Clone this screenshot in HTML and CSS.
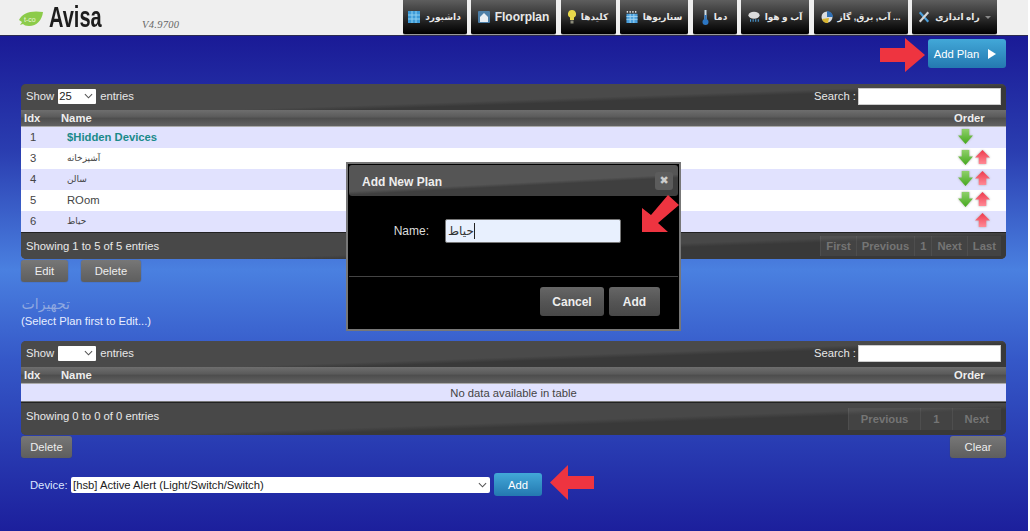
FILE: index.html
```html
<!DOCTYPE html>
<html lang="en">
<head>
<meta charset="utf-8">
<title>Avisa - Plans</title>
<link rel="stylesheet" href="styles.css">
</head>
<body>
<div class="page">
  <header class="topbar">
    <div class="brand">
      <svg class="leaf" viewBox="0 0 24 16" width="24" height="16"><path d="M0 9C3 2 12-1 24 1c-1 8-6 14-14 14-3 0-5-1-6-2l-3 1 2-3z" fill="#8ccb4a"/><text x="5" y="11" font-size="7" fill="#eaf6da" font-family="Liberation Sans">t-co</text></svg>
      <span class="brand-name">Avisa</span>
      <span class="version">V4.9700</span>
    </div>
    <nav class="tabs">
      <a class="tab t1"><svg class="ico" viewBox="0 0 12 12"><rect width="12" height="12" fill="#3d9bd8"/><path d="M0 4h12M0 8h12M4 0v12M8 0v12" stroke="#8fd0f0"/></svg><span dir="rtl">داشبورد</span></a>
      <a class="tab t2 latin"><svg class="ico" viewBox="0 0 12 12"><rect width="12" height="12" rx="1" fill="#4d7fa8"/><path d="M6 2 2 6v5h8V6z" fill="#e8eef4"/></svg><span>Floorplan</span></a>
      <a class="tab t3"><svg class="ico bulb" viewBox="0 0 8 14"><path d="M4 0a4 4 0 0 1 2 7.500V10H2V7.500A4 4 0 0 1 4 0z" fill="#e8d84a"/><rect x="2.500" y="10.500" width="3" height="3" fill="#8c8c7a"/></svg><span dir="rtl">کلیدها</span></a>
      <a class="tab t4"><svg class="ico" viewBox="0 0 12 13"><rect y="3" width="12" height="10" fill="#4a9fdc"/><path d="M0 6h12M0 9h12M4 3v10M8 3v10" stroke="#a5d6f2"/><path d="M1 0v2M4 0v2M7 0v2M10 0v2" stroke="#dcdcdc" stroke-width="1.500"/></svg><span dir="rtl">سناریوها</span></a>
      <a class="tab t5"><svg class="ico thermo" viewBox="0 0 7 15"><rect x="2.500" width="2" height="11" fill="#cfe0ea"/><rect x="2.500" y="5" width="2" height="6" fill="#2c77c4"/><circle cx="3.500" cy="12" r="3" fill="#2c77c4"/></svg><span dir="rtl">دما</span></a>
      <a class="tab t6"><svg class="ico" viewBox="0 0 14 13"><ellipse cx="7" cy="4.500" rx="6.500" ry="4" fill="#dcdcdc"/><path d="M3 9v3M6 9v3M9 9v3M12 9v3" stroke="#4a9fdc" stroke-width="1.200"/></svg><span dir="rtl">آب و هوا</span></a>
      <a class="tab t7"><svg class="ico" viewBox="0 0 12 12"><circle cx="6" cy="6" r="5.500" fill="#d8dce0"/><path d="M6 0a6 6 0 0 1 6 6H6z" fill="#2f6fb4"/><path d="M1 8a6 6 0 0 0 6 4l1-5z" fill="#d9b531"/></svg><span dir="rtl">... آب, برق, گاز</span></a>
      <a class="tab t8"><svg class="ico" viewBox="0 0 14 13"><path d="M2 1 12 12" stroke="#4a9fdc" stroke-width="2.500"/><path d="M12 1 2 12" stroke="#d6d6d6" stroke-width="2.500"/></svg><span dir="rtl">راه اندازی</span><i class="caret"></i></a>
    </nav>
  </header>

  <main class="content">
    <div class="action-row">
      <button class="btn blue addplan">Add Plan <svg viewBox="0 0 8 10" width="8" height="10"><path d="M0 0l8 5-8 5z" fill="#fff"/></svg></button>
    </div>

    <section class="dt first">
      <div class="dt-bar">
        <label>Show <span class="sel">25<svg viewBox="0 0 10 6" width="9" height="6"><path d="M1 1l4 4 4-4" stroke="#555" fill="none" stroke-width="1.200"/></svg></span> entries</label>
        <label class="search">Search : <span class="search-box"></span></label>
      </div>
      <div class="dt-head"><span class="c-idx">Idx</span><span class="c-name">Name</span><span class="c-order">Order</span></div>
      <div class="row odd"><span class="c-idx num">1</span><span class="c-name hidden-dev">$Hidden Devices</span><span class="c-order"><svg class="arr"><use href="#down"/></svg><span class="slot"></span></span></div>
      <div class="row"><span class="c-idx num">3</span><span class="c-name fa" dir="rtl">آشپزخانه</span><span class="c-order"><svg class="arr"><use href="#down"/></svg><svg class="arr"><use href="#up"/></svg></span></div>
      <div class="row odd"><span class="c-idx num">4</span><span class="c-name fa" dir="rtl">سالن</span><span class="c-order"><svg class="arr"><use href="#down"/></svg><svg class="arr"><use href="#up"/></svg></span></div>
      <div class="row"><span class="c-idx num">5</span><span class="c-name">ROom</span><span class="c-order"><svg class="arr"><use href="#down"/></svg><svg class="arr"><use href="#up"/></svg></span></div>
      <div class="row odd"><span class="c-idx num">6</span><span class="c-name fa" dir="rtl">حیاط</span><span class="c-order"><span class="slot"></span><svg class="arr"><use href="#up"/></svg></span></div>
      <div class="dt-foot">
        <span>Showing 1 to 5 of 5 entries</span>
        <div class="pager"><span>First</span><span>Previous</span><span>1</span><span>Next</span><span>Last</span></div>
      </div>
    </section>
    <div class="btn-row">
      <button class="btn grey edit">Edit</button>
      <button class="btn grey del">Delete</button>
    </div>

    <h2 class="devices" dir="rtl">تجهیزات</h2>
    <p class="hint">(Select Plan first to Edit...)</p>

    <section class="dt second">
      <div class="dt-bar">
        <label>Show <span class="sel empty"><svg viewBox="0 0 10 6" width="9" height="6"><path d="M1 1l4 4 4-4" stroke="#555" fill="none" stroke-width="1.200"/></svg></span> entries</label>
        <label class="search">Search : <span class="search-box"></span></label>
      </div>
      <div class="dt-head"><span class="c-idx">Idx</span><span class="c-name">Name</span><span class="c-order">Order</span></div>
      <div class="row odd nodata">No data available in table</div>
      <div class="dt-foot tall">
        <span class="foot-info">Showing 0 to 0 of 0 entries</span>
        <div class="pager wide"><span>Previous</span><span>1</span><span>Next</span></div>
      </div>
    </section>
    <div class="btn-row between">
      <button class="btn grey del2">Delete</button>
      <button class="btn grey clear">Clear</button>
    </div>

    <div class="device-row">
      <span class="device-label">Device:</span>
      <span class="device-sel">[hsb] Active Alert (Light/Switch/Switch)<svg viewBox="0 0 10 6" width="9" height="6"><path d="M1 1l4 4 4-4" stroke="#555" fill="none" stroke-width="1.200"/></svg></span>
      <button class="btn blue add">Add</button>
    </div>
  </main>

  <svg class="arrow a-plan" viewBox="0 0 45 34"><path d="M0 10h25V0l20 17-20 17V24H0z" fill="#ee3440"/></svg>
  <svg class="arrow a-add" viewBox="0 0 44 35"><path d="M44 11H18V0L0 17.500 18 35V24h26z" fill="#ee3440"/></svg>

  <div class="modal">
    <div class="modal-head"><span class="modal-title">Add New Plan</span><span class="close">&#10006;</span></div>
    <div class="modal-body">
      <span class="modal-label">Name:</span>
      <span class="modal-input"><span class="cursor"></span><span dir="rtl">حیاط</span></span>
    </div>
    <div class="modal-foot">
      <button class="btn dark cancel">Cancel</button>
      <button class="btn dark madd">Add</button>
    </div>
  </div>
  <svg class="arrow a-modal" viewBox="0 0 38 38"><path d="M0 13V37H26L16 28 37 10 26 0 9 20z" fill="#ee3440"/></svg>

  <svg class="defs" width="0" height="0">
    <defs>
      <linearGradient id="gd" x1="0" y1="0" x2="0" y2="1"><stop offset="0" stop-color="#8fd06a"/><stop offset="1" stop-color="#45a81e"/></linearGradient>
      <linearGradient id="gu" x1="0" y1="0" x2="0" y2="1"><stop offset="0" stop-color="#ee3a4c"/><stop offset="1" stop-color="#ff8a96"/></linearGradient>
      <symbol id="down" viewBox="0 0 14 14"><path d="M3.500 0h7v6H14l-7 8-7-8h3.500z" fill="url(#gd)"/></symbol>
      <symbol id="up" viewBox="0 0 14 14"><path d="M7 0l7 7h-3.500v6h-7V7H0z" fill="url(#gu)"/></symbol>
    </defs>
  </svg>
</div>
</body>
</html>
```
FILE: styles.css
```css
* { box-sizing: border-box; }
html, body { margin: 0; padding: 0; }
body { font-family: "Liberation Sans", "DejaVu Sans", sans-serif; font-size: 11.25px; background: #fff; }
.page { position: relative; width: 1028px; height: 531px; overflow: hidden; background: linear-gradient(to bottom, #1a1a96 35px, #2a3db0 150px, #4a80e0 270px, #3558c8 360px, #1c1f9c 531px); }

.topbar { height: 36px; background: #efefef; border-bottom: 1px solid #2c2c50; display: flex; justify-content: space-between; }
.brand { display: flex; align-items: flex-start; padding-left: 19px; }
.leaf { margin-top: 11px; }
.brand-name { font-family: "Liberation Sans", sans-serif; font-weight: bold; font-size: 29px; line-height: 30px; margin-left: 6px; margin-top: 2px; color: #1d1d1d; transform: scaleX(.69); transform-origin: left; width: 93px; }
.version { font-family: "Liberation Serif", serif; font-style: italic; font-size: 10.500px; margin-top: 19px; color: #666; letter-spacing: .3px; }
.tabs { display: flex; gap: 4.500px; padding-right: 31px; height: 35px; }
.tab { height: 35px; display: flex; align-items: center; justify-content: center; gap: 5px; border-radius: 0 0 2px 2px; border-bottom: 1px solid #999; background: linear-gradient(to bottom, #5e5e5e 0, #3a3a3a 40%, #161616 75%, #000 100%); color: #e8e8e8; font-size: 9px; font-weight: bold; white-space: nowrap; }
.latin { font-size: 12px; }
.t1 { width: 64px; } .t2 { width: 85px; } .t3 { width: 55px; } .t4 { width: 68px; } .t5 { width: 44px; } .t6 { width: 68px; } .t7 { width: 94px; } .t8 { width: 85px; }
.ico { width: 12px; height: 12px; flex: none; }
.bulb { width: 8px; height: 14px; }
.thermo { width: 7px; height: 15px; }
.caret { width: 0; height: 0; border: 3px solid transparent; border-top-color: #888; margin-top: 3px; }

.content { padding: 0 22px 0 21px; color: #fff; }
.action-row { display: flex; justify-content: flex-end; padding-top: 3px; height: 48px; }
.btn { border: 0; font-family: inherit; font-size: 11.25px; color: #fff; border-radius: 3px; padding: 0; cursor: default; }
.blue { background: linear-gradient(to bottom, #42a8d8, #2478b0); }
.grey { background: linear-gradient(to bottom, #777, #6a6a6a 50%, #5e5e5e); color: #eee; box-shadow: 0 0 1px #444; height: 22px; }
.addplan { width: 78px; height: 29px; display: flex; align-items: center; justify-content: center; gap: 9px; padding-right: 4px; }

.dt { width: 985px; border-radius: 5px; background: #3d3d3d; overflow: hidden; color: #e8e8e8; }
.dt-bar { height: 26px; display: flex; justify-content: space-between; align-items: center; padding: 0 5px 2px; background: linear-gradient(178deg, #4a4a4a 55%, #393939 62%); }
.dt label { display: flex; align-items: center; gap: 4px; }
.search { gap: 2px !important; }
.sel { width: 38px; height: 15px; background: #fff; color: #222; display: flex; justify-content: space-between; align-items: center; padding: 0 3px 0 1px; border-radius: 1px; }
.sel.empty { justify-content: flex-end; }
.search-box { width: 143px; height: 17px; background: #fff; border: 1px solid #ccc; }
.dt-head { height: 17px; display: flex; align-items: center; background: linear-gradient(to bottom, #6e6e6e, #5a5a5a 45%, #4d4d4d 50%, #616161); font-weight: bold; color: #eee; border-bottom: 1px solid #aaa; }
.c-idx { width: 40px; padding-left: 3px; }
.c-name { flex: 1; }
.c-order { width: 48px; display: flex; gap: 2px; }
.dt-head .c-order { width: 52px; }
.row { height: 21px; padding-bottom: 2px; display: flex; align-items: center; background: #fff; color: #444; }
.row.odd { background: #e1e2fe; }
.row .c-idx { padding-left: 9px; }
.row .c-name { padding-left: 6px; }
.row .c-name[dir="rtl"] { text-align: left; unicode-bidi: plaintext; font-size: 9px; }
.hidden-dev { font-weight: bold; color: #1a8a8a; }
.arr, .slot { width: 15px; height: 15px; display: block; filter: drop-shadow(0 0 1px #aaa); }
.dt-foot { height: 27px; display: flex; justify-content: space-between; align-items: center; padding: 0 5px; border-top: 1px solid #222; background: linear-gradient(178deg, #484848 55%, #393939 62%); }
.dt-foot.tall { height: 33px; }
.foot-info { padding-bottom: 7px; }
.pager { display: flex; background: rgba(255,255,255,.05); color: #757575; font-weight: bold; }
.pager span { padding: 4px 5px; border-left: 1px solid rgba(255,255,255,.06); }
.pager.wide span { padding: 5px 12px; }
.btn-row { display: flex; gap: 13px; margin-top: 1px; width: 985px; }
.between { justify-content: space-between; }
.edit { width: 47px; } .del { width: 60px; } .del2 { width: 51px; } .clear { width: 56px; }
.devices { font-size: 14px; font-weight: normal; color: #8fa8e0; margin: 13px 0 0; height: 18px; line-height: 18px; text-align: right; width: 49px; }
.hint { margin: 2px 0 0; line-height: 13px; color: #e8eeff; height: 26px; }
.row.nodata { justify-content: center; height: 18px; padding-bottom: 0; border-bottom: 1px solid #777; }
.device-row { display: flex; align-items: center; margin-top: 15px; gap: 3px; padding-left: 9px; }
.device-label { color: #dce6ff; width: 38px; }
.device-sel { width: 419px; height: 16px; background: #fff; color: #222; display: flex; justify-content: space-between; align-items: center; padding: 0 3px 0 2px; border-radius: 2px; }
.add { width: 48px; height: 23px; margin-left: 1px; }

.arrow { position: absolute; }
.a-plan { left: 880px; top: 38px; width: 45px; height: 34px; }
.a-add { left: 550px; top: 465px; width: 44px; height: 35px; }
.a-modal { left: 642px; top: 195px; width: 38px; height: 38px; }

.modal { position: absolute; left: 346px; top: 162px; width: 335px; height: 169px; background: #000; border: 2px solid #777; padding: 1px; }
.modal-head { height: 31px; border-radius: 3px; background: linear-gradient(177deg, #555 55%, #3f3f3f 62%); display: flex; justify-content: space-between; align-items: center; padding: 0 5px 0 13px; color: #eee; font-size: 12px; font-weight: bold; }
.modal-title { padding-top: 2px; }
.close { width: 18px; height: 18px; border-radius: 3px; background: #5c5c5c; color: #ccc; font-size: 11px; display: flex; align-items: center; justify-content: center; }
.modal-body { height: 81px; display: flex; align-items: flex-start; padding-top: 23px; border-bottom: 1px solid #444; }
.modal-label { width: 80px; text-align: right; color: #ddd; font-size: 12px; line-height: 24px; }
.modal-input { margin-left: 16px; width: 176px; height: 24px; background: #e8f0fe; border: 1px solid #777; border-radius: 2px; color: #333; display: flex; align-items: center; padding-left: 2px; font-size: 12px; flex-direction: row-reverse; justify-content: flex-end; }
.cursor { width: 1px; height: 16px; background: #222; }
.modal-foot { display: flex; justify-content: flex-end; gap: 5px; padding: 10px 18px 0 0; }
.dark { background: linear-gradient(to bottom, #666, #555 50%, #484848); color: #eee; font-size: 12px; font-weight: bold; height: 29px; }
.cancel { width: 64px; } .madd { width: 51px; }
.defs { position: absolute; }
```
